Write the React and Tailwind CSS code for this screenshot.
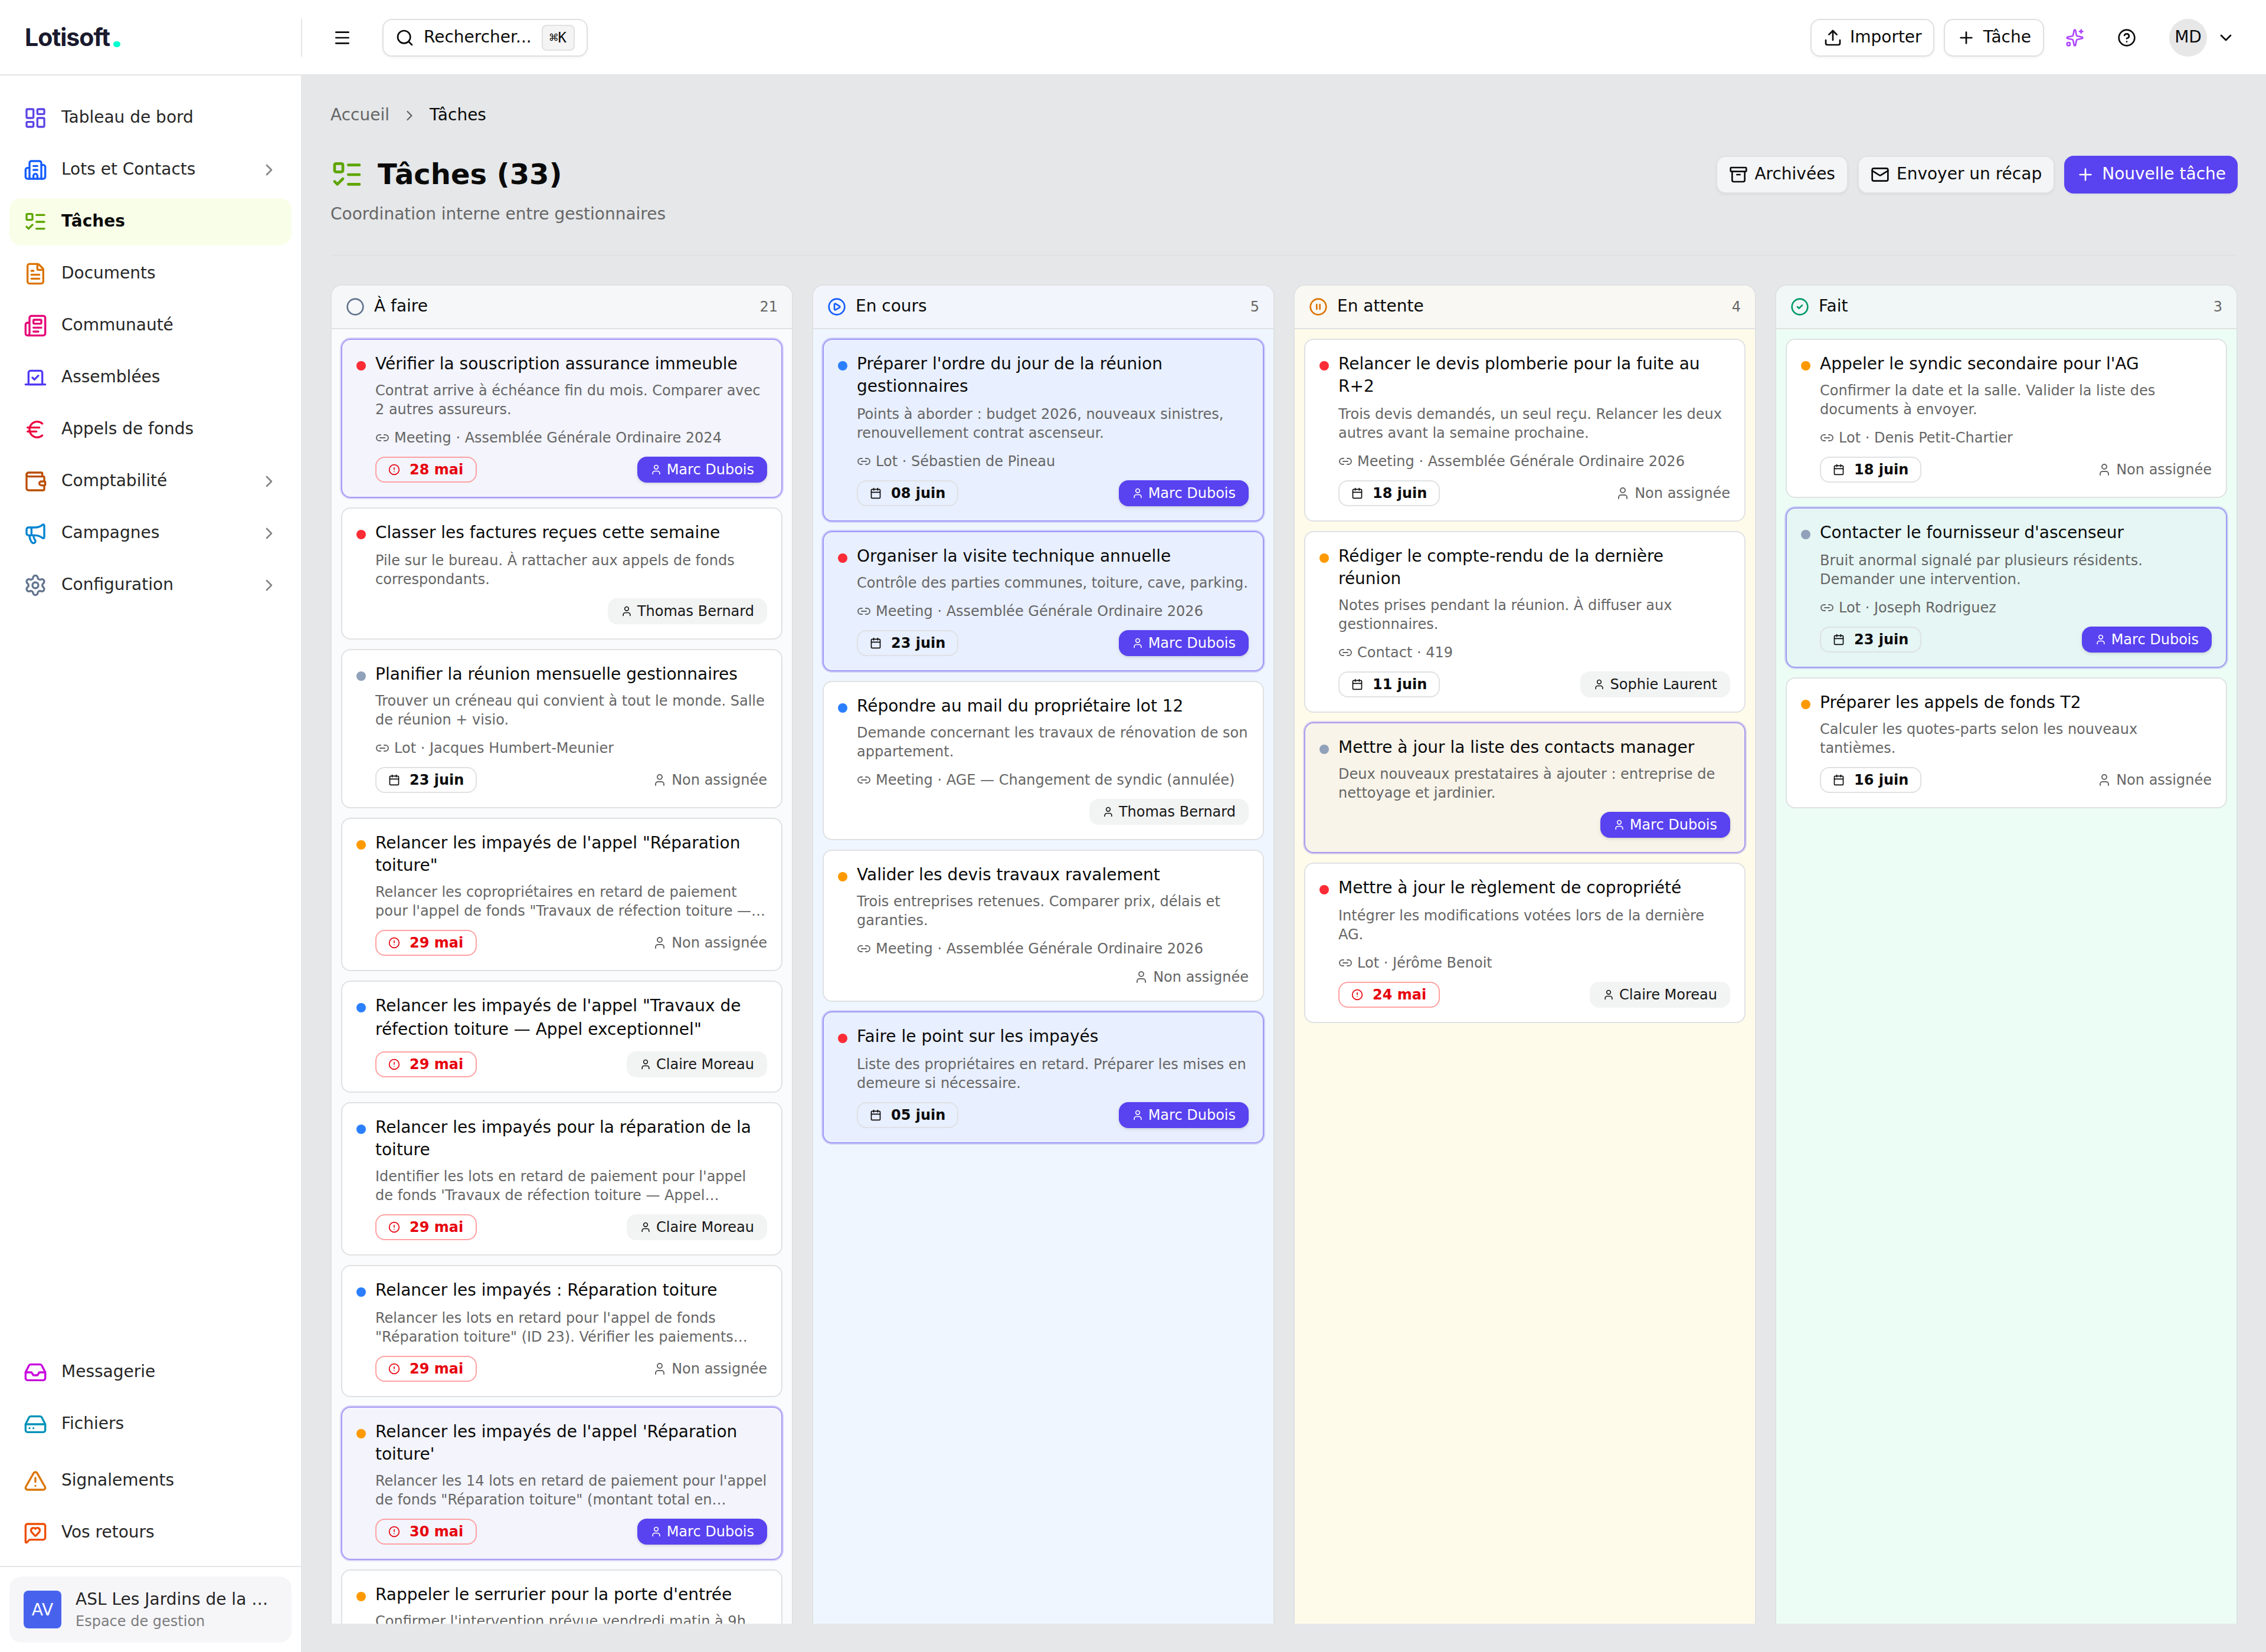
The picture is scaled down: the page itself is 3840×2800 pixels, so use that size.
import {
  Archive,
  Building2,
  Calendar,
  ChevronDown,
  ChevronRight,
  Circle,
  CircleAlert,
  CircleCheck,
  CirclePause,
  CirclePlay,
  CircleQuestionMark,
  Euro,
  FileText,
  HardDrive,
  Inbox,
  LayoutDashboard,
  Link2,
  ListTodo,
  Mail,
  Megaphone,
  Menu,
  MessageSquareHeart,
  Newspaper,
  Plus,
  Search,
  Settings,
  Sparkles,
  TriangleAlert,
  Upload,
  User,
  Vote,
  Wallet,
} from 'lucide-react'

const NAV = [
  { label: 'Tableau de bord', icon: LayoutDashboard, color: 'text-[#5b45e6]' },
  { label: 'Lots et Contacts', icon: Building2, color: 'text-blue-600', children: true },
  { label: 'Tâches', icon: ListTodo, color: 'text-lime-600', active: true },
  { label: 'Documents', icon: FileText, color: 'text-[#dc7404]' },
  { label: 'Communauté', icon: Newspaper, color: 'text-pink-600' },
  { label: 'Assemblées', icon: Vote, color: 'text-indigo-600' },
  { label: 'Appels de fonds', icon: Euro, color: 'text-rose-600' },
  { label: 'Comptabilité', icon: Wallet, color: 'text-amber-700', children: true },
  { label: 'Campagnes', icon: Megaphone, color: 'text-sky-600', children: true },
  { label: 'Configuration', icon: Settings, color: 'text-slate-500', children: true },
]

const NAV_TOOLS = [
  { label: 'Messagerie', icon: Inbox, color: 'text-fuchsia-600' },
  { label: 'Fichiers', icon: HardDrive, color: 'text-cyan-600' },
]

const NAV_SUPPORT = [
  { label: 'Signalements', icon: TriangleAlert, color: 'text-[#dc7404]' },
  { label: 'Vos retours', icon: MessageSquareHeart, color: 'text-[#ed4e05]' },
]

const PRIORITY = {
  high: 'bg-[#fb2c36]',
  medium: 'bg-[#fe9a00]',
  normal: 'bg-[#2b7fff]',
  low: 'bg-[#90a1b9]',
}

const ME = 'Marc Dubois'

const COLUMNS = [
  {
    title: 'À faire',
    count: 21,
    icon: Circle,
    iconColor: 'text-slate-500',
    body: 'bg-[#fafbfd]',
    head: 'bg-[#f5f7f8]',
    tasks: [
      {
        title: 'Vérifier la souscription assurance immeuble',
        desc: 'Contrat arrive à échéance fin du mois. Comparer avec 2 autres assureurs.',
        link: 'Meeting · Assemblée Générale Ordinaire 2024',
        date: '28 mai',
        late: true,
        who: ME,
        priority: 'high',
      },
      {
        title: 'Classer les factures reçues cette semaine',
        desc: 'Pile sur le bureau. À rattacher aux appels de fonds correspondants.',
        who: 'Thomas Bernard',
        priority: 'high',
      },
      {
        title: 'Planifier la réunion mensuelle gestionnaires',
        desc: 'Trouver un créneau qui convient à tout le monde. Salle de réunion + visio.',
        link: 'Lot · Jacques Humbert-Meunier',
        date: '23 juin',
        priority: 'low',
      },
      {
        title: 'Relancer les impayés de l\'appel "Réparation toiture"',
        desc: 'Relancer les copropriétaires en retard de paiement pour l\'appel de fonds "Travaux de réfection toiture —…',
        date: '29 mai',
        late: true,
        priority: 'medium',
      },
      {
        title: 'Relancer les impayés de l\'appel "Travaux de réfection toiture — Appel exceptionnel"',
        date: '29 mai',
        late: true,
        who: 'Claire Moreau',
        priority: 'normal',
      },
      {
        title: 'Relancer les impayés pour la réparation de la toiture',
        desc: "Identifier les lots en retard de paiement pour l'appel de fonds 'Travaux de réfection toiture — Appel…",
        date: '29 mai',
        late: true,
        who: 'Claire Moreau',
        priority: 'normal',
      },
      {
        title: 'Relancer les impayés : Réparation toiture',
        desc: 'Relancer les lots en retard pour l\'appel de fonds "Réparation toiture" (ID 23). Vérifier les paiements…',
        date: '29 mai',
        late: true,
        priority: 'normal',
      },
      {
        title: "Relancer les impayés de l'appel 'Réparation toiture'",
        desc: 'Relancer les 14 lots en retard de paiement pour l\'appel de fonds "Réparation toiture" (montant total en…',
        date: '30 mai',
        late: true,
        who: ME,
        priority: 'medium',
      },
      {
        title: "Rappeler le serrurier pour la porte d'entrée",
        desc: "Confirmer l'intervention prévue vendredi matin à 9h",
        priority: 'medium',
        cut: true,
      },
    ],
  },
  {
    title: 'En cours',
    count: 5,
    icon: CirclePlay,
    iconColor: 'text-blue-600',
    body: 'bg-[#eff6ff]',
    head: 'bg-[#f2f5fb]',
    tasks: [
      {
        title: "Préparer l'ordre du jour de la réunion gestionnaires",
        desc: 'Points à aborder : budget 2026, nouveaux sinistres, renouvellement contrat ascenseur.',
        link: 'Lot · Sébastien de Pineau',
        date: '08 juin',
        who: ME,
        priority: 'normal',
      },
      {
        title: 'Organiser la visite technique annuelle',
        desc: 'Contrôle des parties communes, toiture, cave, parking.',
        link: 'Meeting · Assemblée Générale Ordinaire 2026',
        date: '23 juin',
        who: ME,
        priority: 'high',
      },
      {
        title: 'Répondre au mail du propriétaire lot 12',
        desc: 'Demande concernant les travaux de rénovation de son appartement.',
        link: 'Meeting · AGE — Changement de syndic (annulée)',
        who: 'Thomas Bernard',
        priority: 'normal',
      },
      {
        title: 'Valider les devis travaux ravalement',
        desc: 'Trois entreprises retenues. Comparer prix, délais et garanties.',
        link: 'Meeting · Assemblée Générale Ordinaire 2026',
        priority: 'medium',
      },
      {
        title: 'Faire le point sur les impayés',
        desc: 'Liste des propriétaires en retard. Préparer les mises en demeure si nécessaire.',
        date: '05 juin',
        who: ME,
        priority: 'high',
      },
    ],
  },
  {
    title: 'En attente',
    count: 4,
    icon: CirclePause,
    iconColor: 'text-[#dc7404]',
    body: 'bg-[#fffbeb]',
    head: 'bg-[#f9f8f3]',
    tasks: [
      {
        title: 'Relancer le devis plomberie pour la fuite au R+2',
        desc: 'Trois devis demandés, un seul reçu. Relancer les deux autres avant la semaine prochaine.',
        link: 'Meeting · Assemblée Générale Ordinaire 2026',
        date: '18 juin',
        priority: 'high',
      },
      {
        title: 'Rédiger le compte-rendu de la dernière réunion',
        desc: 'Notes prises pendant la réunion. À diffuser aux gestionnaires.',
        link: 'Contact · 419',
        date: '11 juin',
        who: 'Sophie Laurent',
        priority: 'medium',
      },
      {
        title: 'Mettre à jour la liste des contacts manager',
        desc: 'Deux nouveaux prestataires à ajouter : entreprise de nettoyage et jardinier.',
        who: ME,
        priority: 'low',
      },
      {
        title: 'Mettre à jour le règlement de copropriété',
        desc: 'Intégrer les modifications votées lors de la dernière AG.',
        link: 'Lot · Jérôme Benoit',
        date: '24 mai',
        late: true,
        who: 'Claire Moreau',
        priority: 'high',
      },
    ],
  },
  {
    title: 'Fait',
    count: 3,
    icon: CircleCheck,
    iconColor: 'text-emerald-600',
    body: 'bg-[#ecfdf5]',
    head: 'bg-[#f1f7f6]',
    tasks: [
      {
        title: "Appeler le syndic secondaire pour l'AG",
        desc: 'Confirmer la date et la salle. Valider la liste des documents à envoyer.',
        link: 'Lot · Denis Petit-Chartier',
        date: '18 juin',
        priority: 'medium',
      },
      {
        title: "Contacter le fournisseur d'ascenseur",
        desc: 'Bruit anormal signalé par plusieurs résidents. Demander une intervention.',
        link: 'Lot · Joseph Rodriguez',
        date: '23 juin',
        who: ME,
        priority: 'low',
      },
      {
        title: 'Préparer les appels de fonds T2',
        desc: 'Calculer les quotes-parts selon les nouveaux tantièmes.',
        date: '16 juin',
        priority: 'medium',
      },
    ],
  },
]

export default function App() {
  return (
    <div className="h-[2800px] w-[3840px] overflow-hidden">
      <div className="flex h-[1400px] w-[1920px] origin-top-left scale-200 flex-col overflow-hidden bg-[#e5e7e9] font-['DejaVu_Sans',sans-serif] text-sm text-[#0a0a0a]">
        <TopBar />
        <div className="flex min-h-0 flex-1">
          <Sidebar />
          <main className="flex min-w-0 flex-1 flex-col p-6">
            <Breadcrumb />
            <PageHeader />
            <div className="mt-6 grid min-h-0 flex-1 grid-cols-4 gap-4">
              {COLUMNS.map(column => (
                <Column key={column.title} column={column} />
              ))}
            </div>
          </main>
        </div>
      </div>
    </div>
  )
}

function TopBar() {
  return (
    <header className="flex h-16 shrink-0 items-center border-b border-[#e4e5e6] bg-white pt-px pr-2.5">
      <div className="flex h-8 w-64 items-center border-r border-[#e4e5e6] pl-[21px]">
        <span className="font-['Inter',sans-serif] text-[20.5px] font-bold tracking-tight text-[#1a1a2e]">Lotisoft</span>
        <span className="mt-[10.5px] ml-[3px] size-[5.5px] rounded-full bg-[#00ffd1]" />
      </div>
      <div className="flex flex-1 items-center px-4">
        <button className="flex size-9 items-center justify-center">
          <Menu className="size-4" />
        </button>
        <button className="ml-4 flex h-8 w-[174px] items-center gap-2 rounded-lg border border-[#e0e0e2] bg-white px-2.5 shadow-xs">
          <Search className="size-4 shrink-0" />
          <span className="-mt-px mb-px">Rechercher...</span>
          <kbd className="ml-auto flex h-[22px] items-center rounded border border-[#e0e1e3] bg-[#f4f4f5] px-1.5 font-['DejaVu_Sans_Mono',monospace] text-xs">
            ⌘K
          </kbd>
        </button>
        <div className="ml-auto flex items-center gap-2">
          <Button icon={Upload} label="Importer" className="border border-[#e0e0e2] bg-white" />
          <Button icon={Plus} label="Tâche" className="border border-[#e0e0e2] bg-white" />
          <button className="flex size-9 items-center justify-center">
            <Sparkles className="size-4 text-purple-500" />
          </button>
          <button className="flex size-9 items-center justify-center">
            <CircleQuestionMark className="size-4" />
          </button>
          <button className="flex items-center gap-2 pl-2.5">
            <span className="flex size-8 items-center justify-center rounded-full bg-[#e7e7e8]">
              <span className="-mt-px mb-px">MD</span>
            </span>
            <ChevronDown className="size-4" />
          </button>
        </div>
      </div>
    </header>
  )
}

function Button({ icon: Icon, label, className }) {
  return (
    <button className={`flex h-8 items-center gap-1.5 rounded-lg px-2.5 whitespace-nowrap shadow-xs ${className}`}>
      <Icon className="size-4 shrink-0" />
      <span className="-mt-px mb-px">{label}</span>
    </button>
  )
}

function Sidebar() {
  return (
    <aside className="flex w-64 shrink-0 flex-col border-r border-[#e4e5e6] bg-white text-[#262626]">
      <nav className="flex flex-1 flex-col gap-1 px-2 pt-4">
        {NAV.map(item => (
          <NavItem key={item.label} item={item} />
        ))}
      </nav>
      <nav className="flex flex-col gap-2 px-2 pb-2">
        <div className="flex flex-col gap-1">
          {NAV_TOOLS.map(item => (
            <NavItem key={item.label} item={item} />
          ))}
        </div>
        <div className="flex flex-col gap-1">
          {NAV_SUPPORT.map(item => (
            <NavItem key={item.label} item={item} />
          ))}
        </div>
      </nav>
      <div className="border-t border-[#e4e5e6] p-2">
        <div className="flex h-14 items-center gap-3 rounded-[10px] bg-[#f6f6f9] px-3">
          <div className="flex size-8 shrink-0 items-center justify-center rounded bg-[#4763ee] text-white">AV</div>
          <div className="min-w-0">
            <p className="-mt-px pb-px whitespace-nowrap">ASL Les Jardins de la …</p>
            <p className="text-xs text-[#7c7c7d]">Espace de gestion</p>
          </div>
        </div>
      </div>
    </aside>
  )
}

function NavItem({ item }) {
  const Icon = item.icon
  return (
    <a
      className={`flex h-10 items-center gap-3 rounded-[10px] pr-[11px] pl-3 ${item.active ? 'bg-[#f8fee8] font-bold text-[#0a0a0a]' : ''}`}
    >
      <Icon className={`size-5 shrink-0 ${item.color}`} />
      <span className="-mt-px mb-px flex-1">{item.label}</span>
      {item.children && <ChevronRight className="size-4 text-[#858585]" />}
    </a>
  )
}

function Breadcrumb() {
  return (
    <div className="flex items-center gap-2.5">
      <span className="-mt-px mb-px text-[#666666]">Accueil</span>
      <ChevronRight className="size-3.5 text-[#666666]" />
      <span className="-mt-px mb-px">Tâches</span>
    </div>
  )
}

function PageHeader() {
  return (
    <div className="mt-6 border-b border-[#e0e2e3] pb-6">
      <div className="flex items-center justify-between">
        <div className="flex items-center gap-3">
          <ListTodo className="size-7 text-lime-600" />
          <h1 className="text-2xl font-bold">Tâches (33)</h1>
        </div>
        <div className="flex items-center gap-2">
          <Button icon={Archive} label="Archivées" className="border border-[#e0e1e3] bg-[#f4f5f7]" />
          <Button icon={Mail} label="Envoyer un récap" className="border border-[#e0e1e3] bg-[#f4f5f7]" />
          <Button icon={Plus} label="Nouvelle tâche" className="bg-[#5942f0] text-white" />
        </div>
      </div>
      <p className="mt-[7px] pb-px text-[#666666]">Coordination interne entre gestionnaires</p>
    </div>
  )
}

function Column({ column }) {
  const Icon = column.icon
  return (
    <section
      className={`flex min-h-0 flex-col overflow-hidden rounded-t-[10px] border-x border-t border-[#dfe1e3] ${column.body}`}
    >
      <div className={`flex shrink-0 items-center gap-2 border-b border-[#dfe1e3] px-3 py-2 ${column.head}`}>
        <Icon className={`size-4 ${column.iconColor}`} />
        <h2 className="-mt-px mb-px">{column.title}</h2>
        <span className="ml-auto text-xs text-[#666666]">{column.count}</span>
      </div>
      <div className="flex min-h-0 flex-1 flex-col gap-2 overflow-hidden p-2 pb-0">
        {column.tasks.map(task => (
          <TaskCard key={task.title} task={task} />
        ))}
      </div>
    </section>
  )
}

function TaskCard({ task }) {
  const mine = task.who === ME
  return (
    <article
      className={`flex shrink-0 gap-2 rounded-lg border p-3 ${mine ? 'border-[#5942f0]/50 bg-[#5942f0]/4 ring-1 ring-[#5942f0]/20' : 'border-[#dfe1e3] bg-white'}`}
    >
      <span className={`mt-1.5 size-2 shrink-0 rounded-full ${PRIORITY[task.priority]}`} />
      <div className="min-w-0 flex-1">
        <h3 className="-mt-px pb-px leading-snug">{task.title}</h3>
        {task.desc && <p className="mt-1 line-clamp-2 text-xs text-[#666666]">{task.desc}</p>}
        {task.link && (
          <div className="mt-2 flex items-center gap-1 text-xs text-[#666666]">
            <Link2 className="size-3" />
            <span className="truncate">{task.link}</span>
          </div>
        )}
        {!task.cut && (
          <div className="mt-2 flex items-center justify-between text-xs">
            {task.date && <DueDate date={task.date} late={task.late} />}
            <Assignee name={task.who} mine={mine} />
          </div>
        )}
      </div>
    </article>
  )
}

function DueDate({ date, late = false }) {
  const Icon = late ? CircleAlert : Calendar
  return (
    <span
      className={`flex w-[86px] items-center gap-2 rounded-lg border px-2.5 py-0.5 font-bold whitespace-nowrap ${late ? 'border-red-300 text-red-600' : 'border-[#dfe1e3]'}`}
    >
      <Icon className="size-2.5 shrink-0" />
      {date}
    </span>
  )
}

function Assignee({ name, mine }) {
  if (!name) {
    return (
      <span className="ml-auto flex items-center gap-1 text-[#666666]">
        <User className="size-3" />
        Non assignée
      </span>
    )
  }
  return (
    <span
      className={`ml-auto flex items-center gap-1 rounded-lg px-[11px] py-[3px] ${mine ? 'bg-[#5942f0] text-white shadow-sm' : 'bg-[#f2f3f3] text-[#171717]'}`}
    >
      <User className="size-2.5" />
      {name}
    </span>
  )
}
